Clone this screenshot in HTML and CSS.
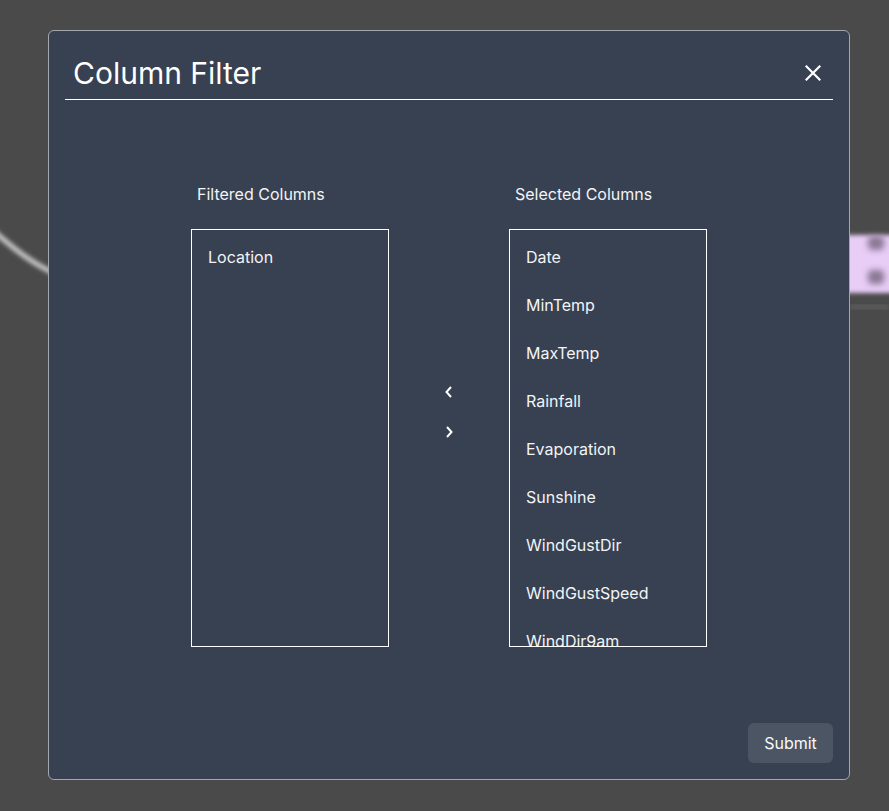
FILE: index.html
```html
<!DOCTYPE html>
<html lang="en">
<head>
<meta charset="utf-8">
<title>Column Filter</title>
<link rel="stylesheet" href="styles.css">
</head>
<body>
<div class="backdrop-art" aria-hidden="true">
  <svg width="889" height="811" viewBox="0 0 889 811">
    <defs>
      <filter id="blur" x="-20%" y="-20%" width="140%" height="140%"><feGaussianBlur stdDeviation="2.2"/></filter>
      <filter id="blur2" x="-50%" y="-50%" width="200%" height="200%"><feGaussianBlur stdDeviation="3"/></filter>
    </defs>
    <path d="M-10 228 C 10 245, 28 262, 60 276" stroke="#c8c8c8" stroke-width="5" fill="none" filter="url(#blur)"/>
    <rect x="840" y="235" width="70" height="58" rx="4" fill="#e8cdf7" filter="url(#blur)"/>
    <rect x="868" y="236" width="16" height="14" rx="4" fill="#8a7894" filter="url(#blur2)"/>
    <rect x="868" y="270" width="16" height="14" rx="4" fill="#8a7894" filter="url(#blur2)"/>
    <rect x="850" y="305" width="39" height="4" fill="#5e5e5e" filter="url(#blur)"/>
  </svg>
</div>
<div class="modal">
  <div class="modal-header">
    <h1 class="modal-title">Column Filter</h1>
    <button class="close-btn" aria-label="Close">
      <svg width="16" height="16" viewBox="0 0 16 16"><path d="M1.5 1.5 L14.5 14.5 M14.5 1.5 L1.5 14.5" stroke="#ffffff" stroke-width="2.2" stroke-linecap="square" fill="none"/></svg>
    </button>
  </div>
  <div class="modal-body">
    <div class="transfer">
      <div class="column">
        <div class="column-label">Filtered Columns</div>
        <ul class="list">
          <li>Location</li>
        </ul>
      </div>
      <div class="arrows">
        <button class="arrow-btn" aria-label="Move left">
          <svg width="12" height="14" viewBox="0 0 12 14"><path d="M8 2 L3.5 7 L8 12" stroke="#ffffff" stroke-width="2" fill="none"/></svg>
        </button>
        <button class="arrow-btn" aria-label="Move right">
          <svg width="12" height="14" viewBox="0 0 12 14"><path d="M4 2 L8.5 7 L4 12" stroke="#ffffff" stroke-width="2" fill="none"/></svg>
        </button>
      </div>
      <div class="column">
        <div class="column-label">Selected Columns</div>
        <ul class="list">
          <li>Date</li>
          <li>MinTemp</li>
          <li>MaxTemp</li>
          <li>Rainfall</li>
          <li>Evaporation</li>
          <li>Sunshine</li>
          <li>WindGustDir</li>
          <li>WindGustSpeed</li>
          <li>WindDir9am</li>
        </ul>
      </div>
    </div>
  </div>
  <div class="modal-footer">
    <button class="submit-btn">Submit</button>
  </div>
</div>
</body>
</html>
```
FILE: styles.css
```css
* { box-sizing: border-box; }
html, body {
  margin: 0;
  padding: 0;
}
body {
  width: 889px;
  height: 811px;
  background: #4a4a4a;
  font-family: Inter, "Noto Sans", sans-serif;
  overflow: hidden;
  position: relative;
  padding-top: 30px;
  padding-left: 48px;
}
.backdrop-art {
  position: absolute;
  left: 0;
  top: 0;
  width: 889px;
  height: 811px;
  z-index: 0;
}
.backdrop-art svg { display: block; }
.modal {
  position: relative;
  z-index: 1;
  width: 802px;
  height: 750px;
  background: #374151;
  border: 1px solid #a3a7ae;
  border-radius: 6px;
  padding: 16px;
  display: flex;
  flex-direction: column;
  color: #f9fafb;
}
.modal-header {
  display: flex;
  align-items: center;
  justify-content: space-between;
  padding: 8px 12px 8px 8px;
  border-bottom: 1px solid #ffffff;
}
.modal-title {
  margin: 0;
  font-size: 30px;
  line-height: 36px;
  font-weight: 400;
  color: #ffffff;
}
.close-btn {
  background: none;
  border: 0;
  padding: 0;
  width: 16px;
  height: 16px;
  display: flex;
  cursor: pointer;
}
.modal-body {
  flex: 1;
  padding-top: 82px;
}
.transfer {
  display: flex;
  justify-content: center;
}
.column {
  width: 198px;
  display: flex;
  flex-direction: column;
}
.column-label {
  font-size: 16px;
  line-height: 24px;
  padding-left: 6px;
  margin-bottom: 23px;
  color: #f3f4f6;
}
.list {
  list-style: none;
  margin: 0;
  padding: 3px 0 0;
  height: 418px;
  border: 1px solid #ffffff;
  overflow: hidden;
}
.list li {
  font-size: 16px;
  line-height: 24px;
  padding: 12px 16px;
  color: #f3f4f6;
}
.arrows {
  width: 120px;
  display: flex;
  flex-direction: column;
  align-items: center;
  justify-content: center;
  gap: 16px;
  padding-bottom: 6px;
}
.arrow-btn {
  background: none;
  border: 0;
  padding: 0;
  width: 24px;
  height: 24px;
  display: flex;
  align-items: center;
  justify-content: center;
  cursor: pointer;
}
.modal-footer {
  display: flex;
  justify-content: flex-end;
}
.submit-btn {
  font-family: Inter, "Noto Sans", sans-serif;
  font-size: 16px;
  line-height: 24px;
  color: #f9fafb;
  background: #4b5563;
  border: 0;
  border-radius: 6px;
  padding: 8px 16px;
  height: 40px;
  width: 85px;
  cursor: pointer;
}
```
